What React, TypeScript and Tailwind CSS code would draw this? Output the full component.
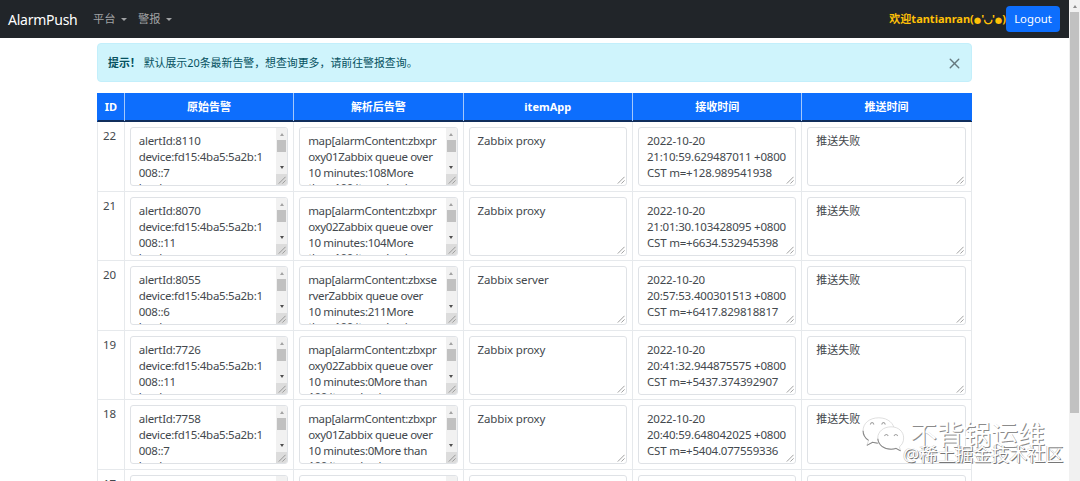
import { X } from "lucide-react";

interface Alarm {
  id: number;
  raw: string[];
  parsed: string[];
  app: string;
  received: string[];
  status: string;
}

const COLUMNS = ["ID", "原始告警", "解析后告警", "itemApp", "接收时间", "推送时间"];

const ALARMS: Alarm[] = [
  {
    id: 22,
    raw: ["alertId:8110", "device:fd15:4ba5:5a2b:1", "008::7", "level:average"],
    parsed: ["map[alarmContent:zbxpr", "oxy01Zabbix queue over", "10 minutes:108More", "than 100 items having"],
    app: "Zabbix proxy",
    received: ["2022-10-20", "21:10:59.629487011 +0800", "CST m=+128.989541938"],
    status: "推送失败",
  },
  {
    id: 21,
    raw: ["alertId:8070", "device:fd15:4ba5:5a2b:1", "008::11", "level:average"],
    parsed: ["map[alarmContent:zbxpr", "oxy02Zabbix queue over", "10 minutes:104More", "than 100 items having"],
    app: "Zabbix proxy",
    received: ["2022-10-20", "21:01:30.103428095 +0800", "CST m=+6634.532945398"],
    status: "推送失败",
  },
  {
    id: 20,
    raw: ["alertId:8055", "device:fd15:4ba5:5a2b:1", "008::6", "level:average"],
    parsed: ["map[alarmContent:zbxse", "rverZabbix queue over", "10 minutes:211More", "than 100 items having"],
    app: "Zabbix server",
    received: ["2022-10-20", "20:57:53.400301513 +0800", "CST m=+6417.829818817"],
    status: "推送失败",
  },
  {
    id: 19,
    raw: ["alertId:7726", "device:fd15:4ba5:5a2b:1", "008::11", "level:average"],
    parsed: ["map[alarmContent:zbxpr", "oxy02Zabbix queue over", "10 minutes:0More than", "100 items having"],
    app: "Zabbix proxy",
    received: ["2022-10-20", "20:41:32.944875575 +0800", "CST m=+5437.374392907"],
    status: "推送失败",
  },
  {
    id: 18,
    raw: ["alertId:7758", "device:fd15:4ba5:5a2b:1", "008::7", "level:average"],
    parsed: ["map[alarmContent:zbxpr", "oxy01Zabbix queue over", "10 minutes:0More than", "100 items having"],
    app: "Zabbix proxy",
    received: ["2022-10-20", "20:40:59.648042025 +0800", "CST m=+5404.077559336"],
    status: "推送失败",
  },
  { id: 17, raw: [], parsed: [], app: "", received: [], status: "" },
];

const Caret = () => (
  <span className="ml-[5px] h-0 w-0 border-x-[3px] border-t-[3px] border-x-transparent border-t-[#a0a2a4]" />
);

const ResizeGrip = () => (
  <svg viewBox="0 0 10 10" className="absolute right-px bottom-px h-[9px] w-[9px]">
    <path d="M2 9.5 9.5 2M6 9.5 9.5 6" stroke="#8a8a8a" strokeWidth="0.9" fill="none" />
  </svg>
);

const BoxScrollbar = () => (
  <div className="absolute top-0 right-0 flex h-full w-[11px] flex-col items-center bg-[#f1f1f1]">
    <div className="mt-[5px] h-0 w-0 border-x-[2.5px] border-b-[3px] border-x-transparent border-b-[#a3a3a3]" />
    <div className="mt-1 h-[12px] w-[9px] bg-[#c1c1c1]" />
    <div className="mt-[14px] h-0 w-0 border-x-[2.5px] border-t-[3px] border-x-transparent border-t-[#505050]" />
    <div className="mt-auto h-[11px] w-full bg-[#dcdcdc]" />
  </div>
);

interface TextBoxProps {
  lines: string[];
  scroll?: boolean;
  font?: string;
}

const TextBox = ({ lines, scroll = false, font = "text-[11.5px] tracking-[-0.15px]" }: TextBoxProps) => (
  <div
    className={`relative h-[59px] overflow-hidden rounded-[3px] border border-[#dfe2e6] bg-white pt-[4.6px] pl-[8px] leading-[16.2px] whitespace-pre text-[#43484d] [&>div:nth-child(4)]:-mt-[0.8px] ${font}`}
  >
    {lines.map((line) => (
      <div key={line}>{line}</div>
    ))}
    {scroll && <BoxScrollbar />}
    <ResizeGrip />
  </div>
);

const AlarmRow = ({ alarm }: { alarm: Alarm }) => (
  <div className="grid grid-cols-[26.8px_repeat(5,169.4px)] border-b border-l border-[#e6e9ec] odd:h-[70px] even:h-[69px] [&>div]:border-r [&>div]:border-[#e6e9ec]">
    <div className="pt-[5.6px] pl-[5px] text-[11.5px] leading-[16px] text-[#43484d]">{alarm.id}</div>
    <div className="px-[5px] pt-[5px]">
      <TextBox lines={alarm.raw} scroll font="text-[11.5px] tracking-[-0.29px]" />
    </div>
    <div className="px-[5px] pt-[5px]">
      <TextBox lines={alarm.parsed} scroll font="text-[11.5px] tracking-[-0.35px]" />
    </div>
    <div className="px-[5px] pt-[5px]">
      <TextBox lines={[alarm.app]} />
    </div>
    <div className="px-[5px] pt-[5px]">
      <TextBox lines={alarm.received} font="text-[11.5px] tracking-[-0.2px]" />
    </div>
    <div className="px-[5px] pt-[5px]">
      <TextBox lines={[alarm.status]} font="text-[11px]" />
    </div>
  </div>
);

const Watermark = () => (
  <div className="pointer-events-none absolute top-[414px] left-[861px] h-[56px] w-[206px]">
    <svg viewBox="0 0 46 40" className="absolute top-0 left-0 h-[38px] w-[45px]">
      <g fill="white" stroke="#cfcfcf" strokeWidth="0.7">
        <path d="M18 4C8 4 1.500 10 1.500 17.500c0 4.500 2 7.700 5.800 10.200L5.500 33l6-3.200c2 .6 4.200.9 6.500.9 10 0 16.500-6 16.500-13.200S28 4 18 4Z" />
        <path d="M31 13.500c-8 0-14 5-14 11.700s6 11.800 14 11.800c1.700 0 3.400-.3 5-.8l5 2.600-1.300-4.200c2.900-2.200 4.500-5.300 4.500-9.400 0-6.700-5.500-11.700-13.200-11.700Z" />
      </g>
      <path d="M9 11q2-4 4 0M21 11q2-4 4 0M24 23q2-3 4 0M34 23q2-3 4 0" fill="none" stroke="#a0a0a0" strokeWidth="1.100" />
      <path d="M1.500 17.500c0 4.500 2 7.700 5.800 10.200M5.500 33 11.500 29.800l5.500 1M17 26c.7 6.700 6.200 11 14 11 1.700 0 3.400-.3 5-.8l5 2.600" fill="none" stroke="#888" strokeWidth="1.100" />
    </svg>
    <div className="absolute top-[3px] left-[49px] text-[27px] leading-[36px] whitespace-nowrap text-white [text-shadow:1px_1px_0_#8b8b8b]">
      不背锅运维
    </div>
    <div className="absolute top-[29px] left-[42px] text-[18px] leading-[22px] whitespace-nowrap text-white [text-shadow:1px_1px_0_#777,-0.5px_-0.5px_0_#bbb]">
      @稀土掘金技术社区
    </div>
  </div>
);

const App = () => {
  return (
    <div className="relative flex h-[481px] w-[1080px] overflow-hidden bg-white font-['Noto_Sans','Noto_Sans_CJK_SC',sans-serif]">
      <div className="w-[1069px] shrink-0">
        {/* Navbar */}
        <nav className="flex h-[38px] items-center bg-[#212529] pr-[9px] pl-[8px]">
          <span className="w-[85px] text-[14px] tracking-[-0.25px] text-white">AlarmPush</span>
          <span className="flex w-[45px] items-center text-[11.3px] whitespace-nowrap text-[#a0a2a4]">
            平台 <Caret />
          </span>
          <span className="flex items-center text-[11.3px] whitespace-nowrap text-[#a0a2a4]">
            警报 <Caret />
          </span>
          <span className="ml-auto text-[11px] font-bold whitespace-nowrap text-[#ffc107]">
            欢迎tantianran(<span className="font-['DejaVu_Sans'] text-[8.5px]">●</span>'
            <span className="font-['DejaVu_Sans'] text-[10px] [-webkit-text-stroke:0.6px_#ffc107]">◡</span>'
            <span className="font-['DejaVu_Sans'] text-[8.5px]">●</span>)
          </span>
          <button className="h-[26px] w-[54px] rounded-[4px] bg-[#0d6efd] text-[11.3px] text-white">Logout</button>
        </nav>

        <main className="ml-[97px] w-[875px]">
          {/* Alert */}
          <div className="mt-[5px] flex h-[39px] items-center rounded-[4px] border border-[#c3effb] bg-[#cff4fc] pt-[2px] pr-[8px] pl-[10px] text-[10.900px] text-[#055160]">
            <strong className="mr-[3px]">提示！</strong>
            <span>默认展示20条最新告警，想查询更多，请前往警报查询。</span>
            <X className="ml-auto h-[17px] w-[17px] text-[#66797e]" strokeWidth={1.9} />
          </div>

          {/* Alarm table */}
          <div className="mt-[11px] grid h-[29px] grid-cols-[26.8px_repeat(5,169.4px)] border-b-2 border-l border-b-[#102e5c] border-l-[#0d6efd] bg-[#0d6efd] text-center text-[11px] leading-[28px] font-bold text-white">
            {COLUMNS.map((name) => (
              <div key={name} className="border-r border-[#a4c8fb] last:border-[#0d6efd]">
                {name}
              </div>
            ))}
          </div>
          <div>
            {ALARMS.map((alarm) => (
              <AlarmRow key={alarm.id} alarm={alarm} />
            ))}
          </div>
        </main>
      </div>

      {/* Page scrollbar */}
      <div className="flex w-[11px] flex-col items-center bg-[#f1f1f1]">
        <div className="mt-[5px] h-0 w-0 border-x-[2.5px] border-b-[3px] border-x-transparent border-b-[#8b8b8b]" />
        <div className="mt-[4px] h-[401px] w-[9px] bg-[#c1c1c1]" />
      </div>

      <Watermark />
    </div>
  );
};

export default App;
